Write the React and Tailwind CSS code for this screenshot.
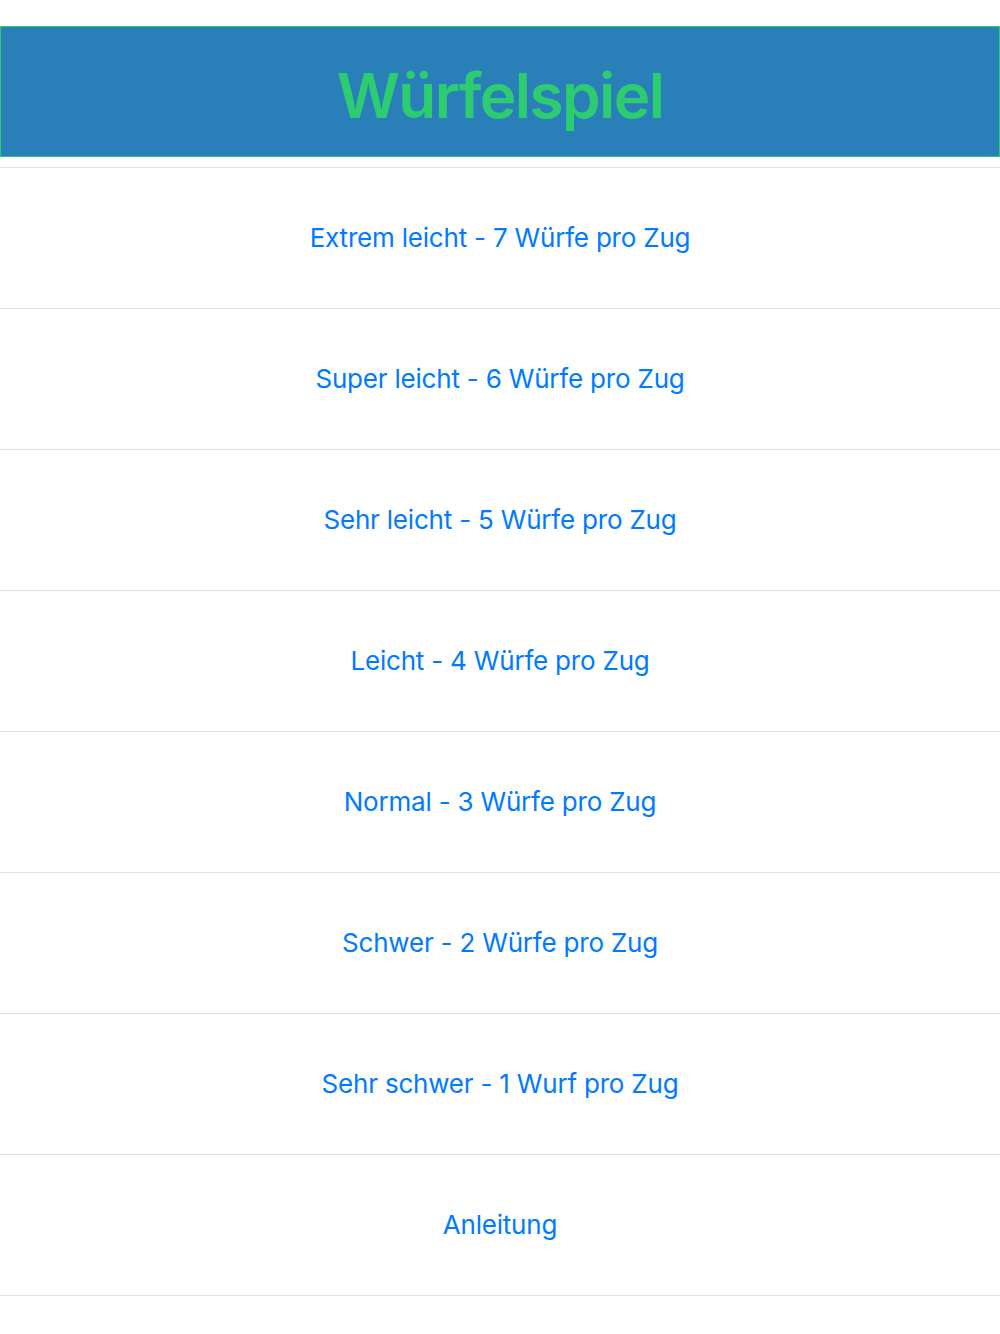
export default function App() {
  const items = [
    "Extrem leicht - 7 Würfe pro Zug",
    "Super leicht - 6 Würfe pro Zug",
    "Sehr leicht - 5 Würfe pro Zug",
    "Leicht - 4 Würfe pro Zug",
    "Normal - 3 Würfe pro Zug",
    "Schwer - 2 Würfe pro Zug",
    "Sehr schwer - 1 Wurf pro Zug",
    "Anleitung",
  ];
  return (
    <div className="w-[1000px] min-h-[1334px] bg-white pt-[26px]" style={{ fontFamily: "Inter, 'Noto Sans', sans-serif" }}>
      <div className="h-[131px] border border-[#2ecc71] bg-[#2980b9] flex items-center justify-center">
        <h1 className="text-[62px] font-semibold text-[#2ecc71] leading-none tracking-[-1.6px] pt-[8px]">Würfelspiel</h1>
      </div>
      <div className="mt-[10px] border-t border-[#e0e0e0]">
        {items.map((t) => (
          <div key={t} className="h-[141px] border-b border-[#e0e0e0] flex items-center justify-center">
            <span className="text-[26px] text-[#007aff] leading-none tracking-[-0.2px]">{t}</span>
          </div>
        ))}
      </div>
    </div>
  );
}
